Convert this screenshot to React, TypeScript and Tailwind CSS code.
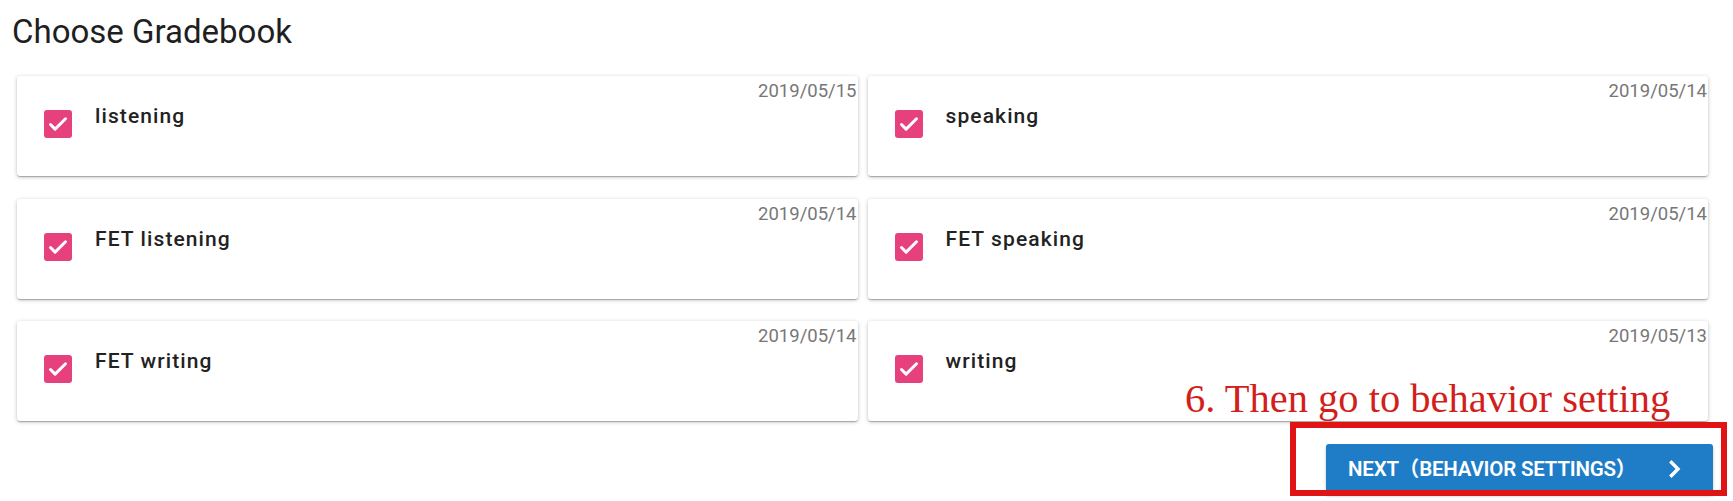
import React from "react";

const items = [
  { label: "listening", date: "2019/05/15" },
  { label: "speaking", date: "2019/05/14" },
  { label: "FET listening", date: "2019/05/14" },
  { label: "FET speaking", date: "2019/05/14" },
  { label: "FET writing", date: "2019/05/14" },
  { label: "writing", date: "2019/05/13" },
];

function CheckBox() {
  return (
    <div className="mt-[6px] flex h-[28px] w-[28px] shrink-0 items-center justify-center rounded-[3px] bg-[#e6417d]">
      <svg width="24" height="24" viewBox="0 0 24 24" fill="none">
        <path d="M4.5 12.5l4.6 4.6L19.5 6.8" stroke="white" strokeWidth="3" strokeLinecap="round" strokeLinejoin="round" />
      </svg>
    </div>
  );
}

export default function App() {
  return (
    <div
      className="relative h-[501px] w-full overflow-hidden bg-white"
      style={{ fontFamily: "Roboto, 'Noto Sans', sans-serif" }}
    >
      <h1 className="ml-[12px] pt-[15px] text-[33px] font-normal leading-[33px] text-[#1f1f1f]">
        Choose Gradebook
      </h1>

      <div className="mt-[28px] ml-[17px] mr-[25px] grid grid-cols-2 gap-x-[10px] gap-y-[22.5px]">
        {items.map((it) => (
          <div
            key={it.label}
            className="relative flex h-[100px] items-start rounded-[3px] bg-white pl-[27px] pt-[28px] shadow-[0_1px_4px_rgba(0,0,0,0.24),0_1px_1px_rgba(0,0,0,0.14),0_2px_1px_-1px_rgba(0,0,0,0.12)]"
          >
            <CheckBox />
            <span className="ml-[23px] text-[21px] font-medium leading-[24px] tracking-[1.1px] text-[#222]">
              {it.label}
            </span>
            <span className="absolute right-[1px] top-[6px] text-[18.5px] leading-none text-[#777]">
              {it.date}
            </span>
          </div>
        ))}
      </div>

      <div className="mt-[23px] flex justify-end pr-[20px]">
        <button className="flex h-[50px] w-[387px] items-center rounded-[3px] bg-[#1f7dc7] pl-[22px] pr-[31px] text-white shadow-[0_2px_3px_rgba(0,0,0,0.25)]">
          <span
            className="text-[20.5px] font-semibold leading-none tracking-[-0.2px]"
            style={{ fontFamily: "Roboto, 'Noto Sans CJK SC', sans-serif" }}
          >
            NEXT（BEHAVIOR SETTINGS）
          </span>
          <svg className="ml-auto" width="14" height="18" viewBox="0 0 14 18" fill="none">
            <path d="M3.5 2.5L10 9l-6.5 6.5" stroke="white" strokeWidth="3.4" strokeLinecap="square" />
          </svg>
        </button>
      </div>

      <div
        className="absolute left-[1185px] top-[379px] whitespace-nowrap text-[40.5px] leading-none text-[#d21f1b]"
        style={{ fontFamily: "'Liberation Serif', serif" }}
      >
        6. Then go to behavior setting
      </div>
      <div className="pointer-events-none absolute left-[1290px] top-[422px] h-[74px] w-[437px] border-[6px] border-[#e01414]" />
    </div>
  );
}
